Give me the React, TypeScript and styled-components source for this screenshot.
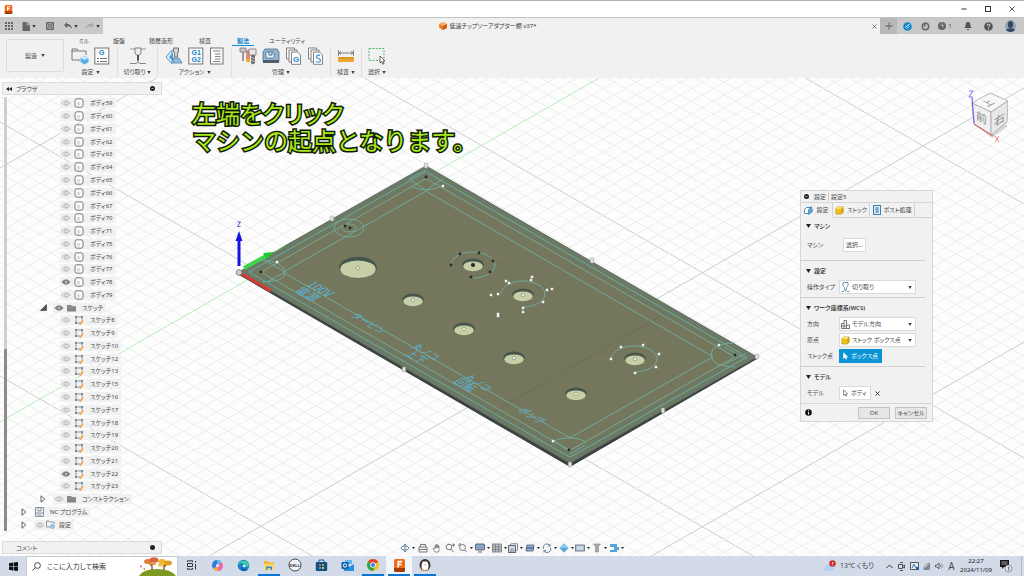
import React from "react";
import styled, { createGlobalStyle } from "styled-components";

const Global = createGlobalStyle`
  * { box-sizing: border-box; }
  html, body { margin: 0; padding: 0; }
  body, button, input, select {
    font-family: "Noto Sans", "Noto Sans CJK JP", sans-serif;
    font-size: 6px;
    line-height: 8px;
    font-feature-settings: "palt";
    color: #4a4a4a;
  }
  button, input, select { border: 0; padding: 0; margin: 0; background: none; }
  svg { display: block; flex: none; }
`;

/* ---------- layout ---------- */

const Page = styled.div`
  display: flex;
  flex-direction: column;
  min-height: 100vh;
  background: #fdfdfd;
`;

const TitleBar = styled.header`
  display: flex;
  align-items: center;
  justify-content: space-between;
  height: 18px;
  padding: 0 7px 0 4px;
  background: #fff;
  border-top: 1px solid #b0b0b0;
  border-bottom: 1px solid #c2c2c2;
`;

const WindowControls = styled.div`
  display: flex;
  gap: 14px;
`;

const IconButton = styled.button<{ $w?: number }>`
  display: flex;
  align-items: center;
  justify-content: center;
  gap: 2px;
  width: ${(p) => (p.$w ? p.$w + "px" : "auto")};
`;

const DocBar = styled.div`
  display: flex;
  height: 16px;
  background: #f1f1f1;
`;

const QuickAccess = styled.div`
  display: flex;
  align-items: center;
  width: 103px;
  padding-left: 4px;
  background: #c9c9c9;
`;

const DocTab = styled.div`
  display: flex;
  flex: 1;
  align-items: center;
  justify-content: center;
  gap: 3px;
  padding-left: 4px;
  color: #3c3c3c;
`;

const DocName = styled.span`
  font-size: 6px;
  line-height: 10px;
`;

const AccountBar = styled.div`
  display: flex;
  align-items: center;
  width: 144px;
  background: #c9c9c9;
`;

const NewTab = styled.button`
  display: flex;
  align-items: center;
  justify-content: center;
  align-self: stretch;
  width: 17px;
  margin-right: 1px;
  background: #b8b8b8;
`;

const Ribbon = styled.div`
  display: flex;
  height: 44px;
  padding-left: 6px;
  background: #f1f1f1;
`;

const Workspace = styled.button`
  display: flex;
  align-items: center;
  justify-content: center;
  gap: 4px;
  width: 58px;
  height: 33px;
  margin-top: 5px;
  border: 1px solid #dcdcdc;
  border-radius: 2px;
`;

const RibbonBody = styled.div`
  display: flex;
  flex-direction: column;
`;

const Tabs = styled.nav`
  display: flex;
  height: 12px;
  padding: 2px 0 0 10px;
`;

const Tab = styled.button<{ $w: number; $on?: boolean }>`
  width: ${(p) => p.$w}px;
  height: 10px;
  white-space: nowrap;
  color: ${(p) => (p.$on ? "#0a84c8" : "#4a4a4a")};
  font-weight: ${(p) => (p.$on ? 700 : 400)};
  border-bottom: 1px solid ${(p) => (p.$on ? "#0a8fdc" : "transparent")};
`;

const Groups = styled.div`
  display: flex;
  margin-top: 1px;
`;

const Group = styled.div<{ $w: number; $last?: boolean }>`
  display: flex;
  flex-direction: column;
  align-items: center;
  width: ${(p) => p.$w}px;
  height: 30px;
  border-right: ${(p) => (p.$last ? "0" : "1px solid #dedede")};
`;

const GroupIcons = styled.div`
  display: flex;
  align-items: center;
  gap: 5px;
  height: 18px;
`;

const GroupLabel = styled.button`
  display: flex;
  align-items: center;
  gap: 2px;
  margin-top: 3px;
  white-space: nowrap;
`;

const Stage = styled.main`
  position: relative;
  display: flex;
  flex: 1;
  overflow: hidden;
`;

const SceneLayer = styled.svg`
  position: absolute;
  inset: 0;
  width: 100%;
  height: 100%;
`;

const Browser = styled.aside`
  position: relative;
  display: flex;
  flex-direction: column;
  width: 160px;
  margin: 4px 0 2px 2px;
`;

const PanelBar = styled.div<{ $indent?: boolean }>`
  display: flex;
  align-items: center;
  justify-content: space-between;
  height: 13px;
  padding: 0 6px 0 ${(p) => (p.$indent ? 13 : 3)}px;
  background: #f1f1f1;
  border: 1px solid #dcdcdc;
`;

const BarTitle = styled.span`
  display: flex;
  align-items: center;
  gap: 4px;
`;

const TreeWrap = styled.div`
  display: flex;
  flex: 1;
  margin: 2px 0 10px 2px;
`;

const ScrollTrack = styled.div`
  width: 3px;
  padding-top: 252px;
  background: #cfcfcf;
`;

const ScrollThumb = styled.div`
  height: 100%;
  background: #8c8c8c;
`;

const Tree = styled.ul`
  display: flex;
  flex: 1;
  flex-direction: column;
  margin: 0;
  padding: 0;
  list-style: none;
`;

const TreeRow = styled.li<{ $indent: number }>`
  display: flex;
  flex: 1;
  align-items: center;
  padding-left: ${(p) => p.$indent}px;
`;

const RowLabel = styled.span<{ $gap?: number }>`
  display: flex;
  align-items: center;
  gap: ${(p) => p.$gap ?? 5}px;
  height: 10px;
  padding: 0 3px 0 1px;
  background: #f1f1f1;
  white-space: nowrap;
`;

const RowName = styled.span`
  padding-left: 3px;
`;

const Expander = styled.span`
  width: 13px;
`;

const Caption = styled.div`
  position: absolute;
  left: 192px;
  top: 23px;
  display: flex;
  flex-direction: column;
`;

const CaptionLine = styled.span<{ $tight?: boolean }>`
  height: 27px;
  font-family: "Liberation Sans", "Noto Sans CJK JP", sans-serif;
  font-size: 24px;
  font-feature-settings: ${(p) => (p.$tight ? '"palt"' : "normal")};
  font-weight: 400;
  line-height: 27px;
  white-space: nowrap;
  color: #a8e61d;
  -webkit-text-stroke: 3px #101a04;
  paint-order: stroke fill;
`;

const CubeLayer = styled.div`
  position: absolute;
  top: 8px;
  right: 16px;
`;

const Dialog = styled.section`
  position: absolute;
  top: 112px;
  right: 91px;
  width: 133px;
  background: #f1f1f1;
  border: 1px solid #d6d6d6;
`;

const DialogTitle = styled.div`
  display: flex;
  align-items: center;
  gap: 5px;
  height: 12px;
  padding-left: 3px;
  border-bottom: 1px solid #d6d6d6;
`;

const TitleText = styled.span`
  padding-right: 2px;
  margin-right: -3px;
  border-right: 1px solid #c8c8c8;
`;

const DialogTabs = styled.div`
  display: flex;
  height: 15px;
`;

const DialogTab = styled.button<{ $w: number; $on?: boolean }>`
  display: flex;
  align-items: center;
  justify-content: center;
  gap: 3px;
  width: ${(p) => p.$w}px;
  white-space: nowrap;
  border-right: 1px solid #d2d2d2;
  border-bottom: 1px solid ${(p) => (p.$on ? "transparent" : "#d2d2d2")};
`;

const TabRest = styled.div`
  flex: 1;
  border-bottom: 1px solid #d2d2d2;
`;

const Section = styled.div<{ $first?: boolean; $last?: boolean }>`
  margin-right: 7px;
  padding: ${(p) => (p.$first ? "0 0 4px" : "2px 0")};
  border-bottom: ${(p) => (p.$last ? "0" : "1px solid #cfcfcf")};
`;

const SectionHead = styled.h2`
  display: flex;
  align-items: center;
  gap: 3px;
  height: 16px;
  margin: 0;
  padding-left: 5px;
  font-size: 6px;
  font-weight: 500;
  color: #222;
`;

const Field = styled.div<{ $tall?: boolean }>`
  display: flex;
  align-items: center;
  height: ${(p) => (p.$tall ? 22 : 16)}px;
  padding-left: 6px;
`;

const FieldLabel = styled.label`
  width: 32px;
  white-space: nowrap;
`;

const SelectBox = styled.span`
  display: flex;
  align-items: center;
  gap: 2px;
  width: 77px;
  height: 14px;
  padding: 0 3px 0 1px;
  background: #fff;
  border: 1px solid #dadada;
`;

const Select = styled.select`
  flex: 1;
  min-width: 0;
  height: 10px;
  appearance: none;
  outline: 0;
`;

const FieldButton = styled.button<{ $on?: boolean; $inset?: boolean }>`
  display: flex;
  align-items: center;
  gap: 3px;
  height: 14px;
  margin-left: ${(p) => (p.$inset ? 4 : 0)}px;
  padding: 0 ${(p) => (p.$inset ? 2 : 3)}px;
  white-space: nowrap;
  color: ${(p) => (p.$on ? "#fff" : "#4a4a4a")};
  background: ${(p) => (p.$on ? "#0a94d6" : "#fff")};
  border: 1px solid ${(p) => (p.$on ? "#0a94d6" : "#dadada")};
`;

const DialogFoot = styled.div`
  display: flex;
  align-items: center;
  gap: 5px;
  height: 18px;
  padding: 0 5px 0 4px;
  border-top: 1px solid #d6d6d6;
`;

const Spacer = styled.span`
  flex: 1;
`;

const FootButton = styled.button`
  width: 32px;
  height: 12px;
  white-space: nowrap;
  background: #e6e6e6;
  border: 1px solid #c4c4c4;
`;

const NavBar = styled.div`
  position: absolute;
  left: 50%;
  bottom: 2px;
  display: flex;
  align-items: center;
  justify-content: space-between;
  width: 224px;
  height: 13px;
  margin-left: -112px;
  background: #f8f8f8;
`;

const Taskbar = styled.footer`
  display: flex;
  align-items: stretch;
  height: 20px;
  background: #d3dbe9;
`;

const StartButton = styled.button`
  display: flex;
  align-items: center;
  justify-content: center;
  width: 26px;
`;

const SearchBox = styled.label`
  display: flex;
  align-items: center;
  gap: 6px;
  width: 152px;
  padding-left: 5px;
  background: #fff;
  border: 1px solid #c6ccd6;
  border-bottom: 0;
`;

const SearchInput = styled.input`
  flex: 1;
  min-width: 0;
  font-size: 7px;
  line-height: 12px;
  outline: 0;
  &::placeholder { color: #333; opacity: 1; }
`;

const TaskButton = styled.button<{ $open?: boolean; $active?: boolean }>`
  display: flex;
  align-items: center;
  justify-content: center;
  width: 26px;
  padding: 0 2px;
  background: ${(p) => (p.$active ? "#f3f6fb" : "none")};
`;

const TaskFace = styled.span<{ $open?: boolean }>`
  display: flex;
  align-items: center;
  justify-content: center;
  width: 22px;
  height: 20px;
  border-bottom: 2px solid ${(p) => (p.$open ? "#0a74d4" : "transparent")};
`;

const Tray = styled.div`
  display: flex;
  align-items: center;
  color: #222;
`;

const Weather = styled.button`
  display: flex;
  align-items: center;
  gap: 3px;
  margin-right: 9px;
  font-size: 7px;
  white-space: nowrap;
`;

const Ime = styled.button`
  width: 13px;
  font-size: 10px;
  line-height: 12px;
`;

const Clock = styled.time`
  width: 36px;
  font-size: 6px;
  line-height: 9px;
  text-align: center;
`;

const DesktopEdge = styled.div`
  align-self: stretch;
  width: 3px;
  margin-left: 3px;
  border-left: 1px solid #b4bccb;
`;

/* ---------- icons ---------- */

const Svg = ({ w, h = w, vb, children }: { w: number; h?: number; vb?: string; children: React.ReactNode }) => (
  <svg width={w} height={h} viewBox={vb ?? `0 0 ${w} ${h}`} fill="none" aria-hidden="true">{children}</svg>
);

const Caret = () => <Svg w={4} h={3}><path d="M.3 0h3.400L2 3z" fill="#3c3c3c" /></Svg>;
const Eye = ({ on }: { on?: boolean }) => (
  <Svg w={10} h={8}>
    <path d="M.8 4Q5-.6 9.200 4 5 8.600.8 4z" fill={on ? "#858585" : "#f0f0f0"} stroke={on ? "#858585" : "#b4b4b4"} strokeWidth=".8" />
    <circle cx="5" cy="4" r="1.500" fill={on ? "#ddd" : "#f8f8f8"} stroke={on ? "#666" : "#a4a4a4"} strokeWidth=".7" />
  </Svg>
);
const BodyIcon = () => (
  <Svg w={10} h={10}>
    <rect x="1" y=".8" width="8" height="8.400" rx="2" fill="#fbfbfb" stroke="#6a6c78" strokeWidth=".9" />
    <rect x="3" y="4" width="3" height="3.500" fill="#dcdcdc" />
  </Svg>
);
const SketchIcon = () => (
  <Svg w={10} h={10}>
    <path d="M2 1v7.500M1 2h8M1 8h5M8 1v4" stroke="#7a8494" strokeWidth=".8" />
    <path d="M1 1h2v2H1zM7 1h2v2H7zM1 7h2v2H1z" fill="#7f8998" />
    <path d="M5.200 9.600l3-4.600 1.400 1-3 4z" fill="#f29a3c" />
  </Svg>
);
const FolderIcon = () => <Svg w={9} h={8}><path d="M0 1h4l1 1h4v5.500H0z" fill="#858585" /><path d="M0 3h9" stroke="#aaa" strokeWidth=".5" /></Svg>;
const NcIcon = () => (
  <Svg w={9} h={10}><path d="M.5.5h8v9h-8zM.5 6h8M3 .5V4h3V.5M2.500 8h4" stroke="#6d7f93" strokeWidth=".8" /></Svg>
);
const SetupIcon = () => (
  <Svg w={9} h={9}><path d="M.5 7V1h2.500l1 1H8v2M.5 7H4" stroke="#7a8494" strokeWidth=".8" /><circle cx="6.500" cy="6.500" r="1.900" fill="#a9d4f2" stroke="#4b93c6" strokeWidth=".7" /></Svg>
);
const Closed = () => <Svg w={6} h={8}><path d="M1 .8v6.400L4.800 4z" stroke="#555" strokeWidth=".9" /></Svg>;
const Opened = () => <Svg w={7} h={7}><path d="M.5 6.500h6v-6z" fill="#555" stroke="#333" strokeWidth=".6" /></Svg>;
const Dot = ({ minus }: { minus?: boolean }) => (
  <Svg w={5}><circle cx="2.500" cy="2.500" r="2.500" fill="#222" />{minus && <path d="M1.300 2.500h2.400" stroke="#fff" strokeWidth=".5" />}</Svg>
);
const Cursor = ({ c = "#444", f = "#fff" }: { c?: string; f?: string }) => (
  <Svg w={5} h={8}><path d="M.6.8v5.600L2 5.200l1 2 .8-.4-.9-1.900h1.700z" fill={f} stroke={c} strokeWidth=".6" /></Svg>
);

const FusionMark = ({ s = 8 }: { s?: number }) => (
  <Svg w={s} vb="0 0 10 10"><rect x=".8" width="8.400" height="10" rx="1.200" fill="#ee6c16" /><path d="M.8 7h8.400v2.500L8.400 10H1.600L.8 9z" fill="#a63b06" /><path d="M4 6.500V2h3M4 4.200h2.500" stroke="#fff" strokeWidth="1.200" /></Svg>
);

const ToolFolder = () => (
  <Svg w={18}>
    <path d="M1 13V2h5l1.500 2H15v4M1 13h8" stroke="#777" strokeWidth="1" /><path d="M1 4h6" stroke="#777" />
    <path d="M13.500 9l4 2v4l-4 2.500-4-2.500v-4z" fill="#58aee4" /><path d="M13.500 9l4 2-4 2-4-2z" fill="#c9e8fa" />
  </Svg>
);
const GLetter = styled.text`
  font-family: "Liberation Sans", sans-serif;
  font-weight: 700;
  fill: #1686c9;
`;
const ToolG = () => (
  <Svg w={16} h={18}>
    <rect x=".8" y="1" width="14" height="16" fill="#fafafa" stroke="#777" />
    <GLetter x="5" y="8" fontSize="7">G</GLetter>
    <path d="M3 11.500h2M6 11.500h7M3 14.500h2M6 14.500h7" stroke="#666" strokeWidth=".9" />
  </Svg>
);
const ToolMill = () => (
  <Svg w={18}>
    <path d="M1 2h16" stroke="#999" /><path d="M6 1h6v5l-1.500 2h-3L6 6z" fill="#eee" stroke="#777" strokeWidth=".9" /><path d="M8 8h2v5l-1 2-1-2z" fill="#555" />
    <path d="M1 16.500h6l2-1.500 2 1.500h6" stroke="#777" strokeWidth=".9" />
  </Svg>
);
const ToolSim = () => (
  <Svg w={18}>
    <path d="M1 10l6-7v14z" fill="#d3eaf9" stroke="#4b93c6" strokeWidth=".9" /><path d="M4 10l4-4v8z" fill="#4e9bd0" />
    <path d="M8.500 1h5v4l-1 1v4h-3V6l-1-1z" fill="#cfd3d8" stroke="#666" strokeWidth=".9" /><path d="M8 11h6l3 5H8z" fill="#8fbde0" stroke="#5a7f9e" strokeWidth=".8" />
  </Svg>
);
const ToolG1G2 = () => (
  <Svg w={16} h={18}>
    <rect x=".8" y="1" width="14" height="16" fill="#fafafa" stroke="#777" />
    <GLetter x="3.500" y="8" fontSize="7">G1</GLetter>
    <GLetter x="3.500" y="15" fontSize="7">G2</GLetter>
  </Svg>
);
const ToolSheet = () => (
  <Svg w={16} h={18}>
    <rect x="1.500" y="1" width="12.500" height="16" fill="#fafafa" stroke="#777" />
    <path d="M4 4h7.500M6 7h5.500M6 9.500h5.500M6 12h5.500M4 14.500h7.500" stroke="#777" strokeWidth=".9" />
  </Svg>
);
const ToolLibrary = () => (
  <Svg w={18}>
    <path d="M1 1h6v4H1z" fill="#c7c7c7" stroke="#777" strokeWidth=".8" /><path d="M3 5h2v9H3z" fill="#999" />
    <path d="M7 3h4v9l-2 3-2-3z" fill="#df8a76" /><path d="M7 12h4v3H7z" fill="#f0b03a" />
    <path d="M10 2h7v6h-7z" fill="#e8e8e8" stroke="#777" strokeWidth=".8" /><path d="M12 8h4v8l-2 1.500L12 16z" fill="#6c6c6c" /><path d="M12 10l4 2M12 13l4 2" stroke="#ddd" strokeWidth=".8" />
  </Svg>
);
const ToolMachine = () => (
  <Svg w={18}>
    <path d="M1 5l2-3h12l2 3v9H1z" fill="#8fb4d4" stroke="#55697c" strokeWidth=".8" /><rect x="4" y="5" width="8" height="6" rx="1" fill="#e5f2fc" stroke="#45627c" strokeWidth=".7" />
    <path d="M7 5v3h3V5" stroke="#45627c" /><path d="M1 13h16v3H1z" fill="#515c68" />
  </Svg>
);
const Sheets = ({ letter }: { letter: string }) => (
  <Svg w={17} h={18}>
    <path d="M1.500 1h8v11h-8z" fill="#fafafa" stroke="#777" strokeWidth=".9" /><path d="M4 3h8v12H4z" fill="#fafafa" stroke="#777" strokeWidth=".9" />
    <path d="M6.500 5h6l3 3v9.300h-9z" fill="#fdfdfd" stroke="#777" strokeWidth=".9" />
    {letter === "G" ? <GLetter x="8" y="15" fontSize="8">G</GLetter> : <path d="M13 8.500c-2-1-4 0-3.500 1.500s4 1.500 4 3.500-3 2-4.500 1" stroke="#4a9fd6" strokeWidth="1.400" />}
  </Svg>
);
const ToolMeasure = () => (
  <Svg w={18}>
    <path d="M1.500 3v6M16.500 3v6M2 6h14M4 4.500L2 6l2 1.500M14 4.500L16 6l-2 1.500" stroke="#777" strokeWidth=".9" />
    <rect x="1" y="10" width="16" height="5" fill="#eda92f" /><path d="M3 10v2M6 10v2M9 10v2M12 10v2M15 10v2" stroke="#a86d0c" strokeWidth=".7" />
  </Svg>
);
const ToolSelect = () => (
  <Svg w={18}>
    <rect x="1" y="1.500" width="15" height="12" stroke="#4fb36a" strokeDasharray="2 1.300" />
    <path d="M12 9v7l1.600-1.500 1.200 2.700 1.300-.6-1.200-2.600H17z" fill="#fff" stroke="#444" strokeWidth=".8" />
  </Svg>
);

/* ---------- drawing of the model ---------- */

const LEFT = { x: 239, y: 272 };
const at = (u: number, v: number) => `${LEFT.x + 331 * u + 187 * v},${LEFT.y + 191 * u - 106 * v}`;
const frame = (inset: number) => {
  const a = inset / 331;
  const b = inset / 187;
  return [at(a, b), at(1 - a, b), at(1 - a, 1 - b), at(a, 1 - b)].join(" ");
};

const range = (n: number) => Array.from({ length: n }, (_, i) => i);
const MINOR = 12.7;

const Grid = () => (
  <g>
    {range(92).map((i) => {
      const b = -640 + i * MINOR;
      return <path key={i} d={`M0 ${b}L1024 ${b + 590}`} stroke={i % 20 === 0 ? "#cdcdcd" : "#ededed"} />;
    })}
    {range(94).map((i) => {
      const b = 66.4 + i * MINOR;
      const major = i % 20 === 8;
      const green = i === 28;
      return <path key={i} d={`M0 ${b}L1024 ${b - 588}`} stroke={green ? "#b4eeb4" : major ? "#cdcdcd" : "#ededed"} />;
    })}
  </g>
);

const holes: [number, number, number][] = [
  [358, 268, 18], [473, 265, 10], [413, 300, 10], [523, 295, 10],
  [464, 329, 10], [514, 358, 10], [576, 394, 10], [635, 359, 10],
];

const lightDots: [number, number][] = [
  [443, 186], [277, 262], [719, 345], [553, 441],
  [491, 295], [498, 294], [506, 281], [509, 283], [531, 280], [532, 277], [547, 290], [552, 289], [543, 302], [523, 308], [523, 312], [498, 314], [498, 316],
  [611, 359], [621, 347], [643, 345], [659, 354], [656, 367], [635, 373],
];
const darkDots: [number, number][] = [
  [426, 177], [261, 272], [735, 355], [569, 450], [345, 226], [350, 228],
  [451, 265], [460, 254], [479, 253], [493, 261], [490, 272], [471, 277],
];
const pins: [number, number][] = [[426, 166], [332, 219], [592, 261], [757, 357], [663, 411], [570, 465], [404, 370]];

const engraved: [number, number, number, string][] = [
  [306, 285, 11, "100V"], [294, 291, 11, "電源"], [350, 316, 9, "タービン"], [411, 347, 9, "丸ノコ"],
  [404, 354, 10, "上下"], [463, 378, 9, "丸ノコ"], [453, 382, 10, "回転"], [517, 411, 9, "ポンプ"],
];

const Engraving = styled.text`
  font-family: "Noto Sans CJK JP", sans-serif;
  font-feature-settings: normal;
  font-weight: 400;
  fill: #5ab4d8;
`;

const Scene = () => (
  <SceneLayer viewBox="0 78 1024 478" preserveAspectRatio="xMinYMin slice" aria-hidden="true">
    <Grid />
    <path d="M239 272L570 463 757 356v3L570 467 239 275z" fill="#3c4240" />
    <polygon points={[at(0, 0), at(1, 0), at(1, 1), at(0, 1)].join(" ")} fill="#6b7965" stroke="#5e6c60" />
    <polygon points={frame(8)} fill="#75775d" />
    <path d="M490 414L664 314" stroke="#6c6e58" />
    <g fill="none" stroke="#70aa9d" strokeWidth="1">
      {[5, 11, 22].map((n) => <polygon key={n} points={frame(n)} />)}
      <path d="M411 186q15 8 30 0M409 179l17 11 17-11M409 179l17-9" />
      <path d="M735 343q-24 0-24 12t24 12M724 347l22 12M724 365l22-12" />
      <path d="M552 443q4-5 17-5t17 5M555 442l16 10M585 445l-16 10" />
      <path d="M262 260q22 2 23 12t-23 10M266 261l19 11-18 10" />
      <ellipse cx="349" cy="228" rx="15" ry="9" /><ellipse cx="349" cy="228" rx="7" ry="4" />
      <path d="M451 265A22 13 0 1 1 473 278" />
      <path d="M501 294A22 13 0 1 1 523 307" />
      <path d="M611 359A23 13 0 1 1 635 372" />
    </g>
    <g stroke="#8b7d62" strokeWidth=".8" fill="none">
      <path d="M440 264l4 2M455 251l5 2M482 250l4-2M493 259l8-2M492 273l6 2M472 280l3 3" />
      <path d="M534 278l5-2M549 303l-6-2M603 359l6 1M645 343l5-3M660 353l6-2M656 367l6 3M636 376l3 3" />
    </g>
    {holes.map(([x, y, r]) => (
      <g key={`${x}-${y}`}>
        <ellipse cx={x} cy={y - 0.5} rx={r + 0.8} ry={r * 0.6} fill="#46564c" />
        <ellipse cx={x} cy={y + 1.3} rx={r - 0.3} ry={r * 0.49} fill="#c6cfa6" />
        <circle cx={x} cy={y} r="1.800" fill="#e8e8dc" stroke="#8f9686" strokeWidth=".7" />
      </g>
    ))}
    <circle cx="473" cy="265" r="2" fill="#262b28" />
    {engraved.map(([x, y, s, t]) => (
      <Engraving key={`${t}-${x}`} fontSize={s} transform={`translate(${x} ${y}) rotate(30) skewX(-30)`}>{t}</Engraving>
    ))}
    {darkDots.map(([x, y]) => <circle key={`${x}-${y}`} cx={x} cy={y} r="1.400" fill="#262b28" />)}
    {lightDots.map(([x, y]) => <rect key={`${x}-${y}`} x={x - 1.2} y={y - 1.2} width="2.400" height="2.400" fill="#f4f4f0" />)}
    {pins.map(([x, y]) => <rect key={`${x}-${y}`} x={x - 1.7} y={y - 3} width="3.400" height="5" rx="1" fill="#dfe2de" stroke="#9aa09a" strokeWidth=".6" />)}
    <path d="M244 268L266 256" stroke="#3fd44b" strokeWidth="4" />
    <path d="M263 253l11-1-7 7z" fill="#20c830" /><path d="M274 252l10-6" stroke="#86e88a" />
    <path d="M242 274L271 291" stroke="#d63a30" strokeWidth="3" />
    <path d="M239 266v-28" stroke="#1414e0" strokeWidth="3" /><path d="M235.500 241l3.500-10 3.500 10z" fill="#1414e0" />
    <path d="M237.500 222h3l-3 4.500h3" stroke="#4a4ab8" strokeWidth=".9" fill="none" />
    <circle cx="239" cy="272.500" r="2.800" fill="#ccc" stroke="#888" />
  </SceneLayer>
);

const CubeText = styled.text`
  font-family: "Noto Sans CJK JP", sans-serif;
  font-weight: 400;
  fill: #85898d;
`;

const ViewCube = () => (
  <CubeLayer>
    <Svg w={42} h={58} vb="965 86 42 58">
      <path d="M974 125l17 13 16-12-8-4z" fill="#d6d6d6" />
      <g stroke="#a6a6a6" strokeWidth=".8" strokeLinejoin="round">
        <path d="M971 103l18-10 18 8-17 11z" fill="#f7f7f7" />
        <path d="M971 103l19 9v23l-17-11z" fill="#f0f0f0" />
        <path d="M1007 101l-17 11v23l16-13z" fill="#e8e8e8" />
      </g>
      <CubeText fontSize="9" transform="translate(986 107) rotate(-28) skewX(32)">上</CubeText>
      <CubeText fontSize="11" transform="translate(975 119) skewY(27)">前</CubeText>
      <CubeText fontSize="11" transform="translate(993 127) skewY(-33)">右</CubeText>
      <path d="M971 98l2 25" stroke="#6a6af0" strokeWidth="1.200" /><path d="M973 124l19 12" stroke="#d87070" strokeWidth="1.200" />
      <path d="M968 91h4l-4 6h4" stroke="#6a6af0" strokeWidth=".9" /><path d="M994 136l4 6M998 136l-4 6" stroke="#ee7d7d" strokeWidth=".9" />
    </Svg>
  </CubeLayer>
);

/* ---------- data ---------- */

const bodies = [59, 60, 61, 62, 63, 64, 65, 66, 67, 70, 71, 75, 76, 77, 78, 79];
const sketches = [8, 9, 10, 12, 13, 15, 16, 17, 18, 19, 20, 21, 22, 23];

const navIcons: { d: React.ReactNode; caret?: boolean }[] = [
  { caret: true, d: <><ellipse cx="5" cy="5" rx="4" ry="2" stroke="#6d8ba6" /><path d="M5 1v8M3.500 2.500L5 1l1.500 1.500M3.500 7.500L5 9l1.500-1.500" stroke="#6d8ba6" /></> },
  { d: <><path d="M1 4h8v5H1zM2.500 4V1.500h5V4M1 6.500h8" stroke="#777" /></> },
  { d: <path d="M3 9L1 5.500l1-.5 1 1V2.500h1V5 1.500h1V5 2h1v3-2h1v4L6.500 9z" fill="#fff" stroke="#777" strokeWidth=".8" /> },
  { d: <><circle cx="4" cy="4" r="2.800" stroke="#777" /><path d="M6 6l2.500 3M7 2h3M8.500.5v3" stroke="#777" /></> },
  { caret: true, d: <><circle cx="4.500" cy="4.500" r="3" stroke="#777" /><path d="M6.500 7l2 2M1 1h2M1 1v2" stroke="#777" /></> },
  { caret: true, d: <><rect x=".5" y="1" width="9" height="6" rx="1" fill="#84a3c4" stroke="#667" /><path d="M3 9h4" stroke="#667" /></> },
  { caret: true, d: <><rect x=".5" y="1" width="9" height="8" fill="#b9bec4" stroke="#777" strokeWidth=".8" /><path d="M.5 4h9M.5 6.500h9M3.500 1v8M6.500 1v8" stroke="#777" strokeWidth=".7" /></> },
  { caret: true, d: <><rect x=".5" y="2.500" width="7" height="7" fill="#cfd8e0" stroke="#667" /><path d="M2 2.500L3 .8h6.500v6L8 8M4 6a1.500 1.500 0 1 0 .1 0" stroke="#667" strokeWidth=".8" /></> },
  { caret: true, d: <><path d="M2 2h7L8 8H1z" fill="#8eb4d8" stroke="#557" strokeWidth=".8" /><path d="M1 5h8" stroke="#446" /></> },
  { caret: true, d: <path d="M1.500 6A3.500 3.500 0 0 1 8 3M8.500 4.500A3.500 3.500 0 0 1 2 7.500M8 .8V3H6M2 9.500v-2h2" stroke="#5f86a8" /> },
  { caret: true, d: <><path d="M5 .5L9.500 5 5 9.500.5 5z" fill="#55a4dc" /><path d="M5 .5L9.500 5H.5z" fill="#8cc6ee" /></> },
  { caret: true, d: <><rect x=".5" y="2" width="9" height="6" fill="#a9c2da" stroke="#667" strokeWidth=".8" /><path d="M2 4h6M2 6h6" stroke="#fff" strokeWidth=".8" /></> },
  { caret: true, d: <path d="M1.500 1h7L6.500 3.500V9h-3V3.500z" fill="#a8a8a8" stroke="#888" strokeWidth=".6" /> },
  { caret: true, d: <><path d="M1 1h7v3h2v3H8v2H1V7h4V4H1z" fill="#55a4dc" /></> },
];

const tasks: { name: string; open?: boolean; active?: boolean; icon: React.ReactNode }[] = [
  { name: "タスク ビュー", icon: <Svg w={11} h={10}><path d="M1.500 2V.8h5V2M1.500 3.500h5v3h-5zM1.500 8v1.200h5V8M9.500 1v1.500M9.500 4v5.500" stroke="#222" strokeWidth=".9" /></Svg> },
  { name: "Copilot", icon: <Svg w={13}><path d="M1 7c0-4 2-6 5-6l1 3-2 5-3 1z" fill="#2f7de0" /><path d="M6 1h3l2 4-4 1z" fill="#53c4d8" /><path d="M12 6c0 4-2 6-5 6L6 9l2-5 3-.5z" fill="#e66ba6" /><path d="M7 12H4L2 9l4-1z" fill="#f5b03c" /><circle cx="6.500" cy="6.500" r="1.500" fill="#f3e6f7" /></Svg> },
  { name: "Edge", icon: <Svg w={13}><circle cx="6.500" cy="6.500" r="5.800" fill="#1b7fd0" /><path d="M1 6a5.700 5.700 0 0 1 11 0c0 2-3 2.500-4 1.500C8 4 3 3 1 6z" fill="#3ccf9c" /><path d="M5 7c0 3 3 4.500 6 3.500-3 3-8 1-6-3.500z" fill="#0c4fa0" /><circle cx="7" cy="7" r="1.300" fill="#e8f3ff" /></Svg> },
  { name: "エクスプローラー", open: true, icon: <Svg w={12} h={11}><path d="M1 1h4l1 1.500h5V10H1z" fill="#f4b93a" /><path d="M1 4h10v6H1z" fill="#fbd66b" /><path d="M3 10V6.500h6V10H7.500V8h-3v2z" fill="#2f8bd8" /></Svg> },
  { name: "Dell", icon: <Svg w={14}><circle cx="7" cy="7" r="6" fill="#f2f4f8" stroke="#444" /><text x="7" y="8.500" textAnchor="middle" fontSize="4" fontWeight="700" fontFamily="Liberation Sans" fill="#333">DELL</text></Svg> },
  { name: "Store", icon: <Svg w={13}><path d="M4 3V1h5v2" stroke="#1a5f9e" /><rect x=".8" y="3" width="11.400" height="9" rx="1" fill="#134f84" /><path d="M4 5h2v2H4z" fill="#e55a3c" /><path d="M7 5h2v2H7z" fill="#7dbb42" /><path d="M4 8h2v2H4z" fill="#35a8e0" /><path d="M7 8h2v2H7z" fill="#f3bc3a" /></Svg> },
  { name: "Outlook", icon: <Svg w={13}><path d="M4 1h7v4H4z" fill="#5db9ee" /><path d="M3 5l5 3 5-3v7H3z" fill="#2590dc" /><rect x=".5" y="3" width="7" height="7" rx="1" fill="#0c5ea8" /><circle cx="4" cy="6.500" r="1.700" stroke="#fff" /></Svg> },
  { name: "Chrome", open: true, icon: <Svg w={14}><circle cx="7" cy="7" r="6" fill="#f6c21c" /><path d="M7 7L1.800 4A6 6 0 0 1 12.200 4z" fill="#e2412f" /><path d="M7 7L1.800 4A6 6 0 0 0 7 13l2-4z" fill="#2da44e" /><circle cx="7" cy="7" r="2.800" fill="#fff" /><circle cx="7" cy="7" r="2" fill="#3b7de8" /></Svg> },
  { name: "Fusion", open: true, active: true, icon: <FusionMark s={13} /> },
  { name: "ペンギン", open: true, icon: <Svg w={14}><ellipse cx="7" cy="7" rx="5.500" ry="6" fill="#3b332e" /><ellipse cx="7" cy="8" rx="3.500" ry="4.500" fill="#fff" /><circle cx="5.500" cy="4.500" r="1" fill="#fff" /><circle cx="8.500" cy="4.500" r="1" fill="#fff" /><path d="M6 6h2L7 7.500z" fill="#f09a26" /><path d="M3 12h3M8 12h3" stroke="#f09a26" /></Svg> },
];

const RibbonGroup = ({ w, label, last, children }: { w: number; label: string; last?: boolean; children: React.ReactNode }) => (
  <Group $w={w} $last={last}>
    <GroupIcons>{children}</GroupIcons>
    <GroupLabel>{label}<Caret /></GroupLabel>
  </Group>
);

const Choice = ({ id, label, icon, value }: { id: string; label: string; icon: React.ReactNode; value: string }) => (
  <Field>
    <FieldLabel htmlFor={id}>{label}</FieldLabel>
    <SelectBox>{icon}<Select id={id} defaultValue={value}><option>{value}</option></Select><Caret /></SelectBox>
  </Field>
);

const Head = ({ children }: { children: React.ReactNode }) => (
  <SectionHead><Svg w={5} h={4}><path d="M0 0h5L2.500 4z" fill="#222" /></Svg>{children}</SectionHead>
);

const StockCube = ({ s = 9 }: { s?: number }) => (
  <Svg w={s} vb="0 0 10 10"><path d="M1 3l2-2h6v6L7 9H1z" fill="#f1c21e" stroke="#b08a14" strokeWidth=".7" /><path d="M1 3l2-2h6L7 3z" fill="#fbe577" /><path d="M7 3l2-2v6L7 9z" fill="#cf9d10" /></Svg>
);

export default function App() {
  return (
    <Page>
      <Global />
      <TitleBar>
        <FusionMark s={9} />
        <WindowControls>
          <IconButton $w={10} aria-label="最小化"><Svg w={6}><path d="M.5 3h5" stroke="#333" /></Svg></IconButton>
          <IconButton $w={10} aria-label="最大化"><Svg w={6}><rect x=".5" y=".5" width="5" height="5" stroke="#333" /></Svg></IconButton>
          <IconButton $w={10} aria-label="閉じる"><Svg w={6}><path d="M.5.5l5 5M5.500.5l-5 5" stroke="#333" strokeWidth=".8" /></Svg></IconButton>
        </WindowControls>
      </TitleBar>

      <DocBar>
        <QuickAccess>
          <IconButton $w={9} aria-label="データ パネル"><Svg w={8}><path d="M0 0h2v2H0zM3 0h2v2H3zM6 0h2v2H6zM0 3h2v2H0zM3 3h2v2H3zM6 3h2v2H6zM0 6h2v2H0zM3 6h2v2H3zM6 6h2v2H6z" fill="#666" /></Svg></IconButton>
          <IconButton $w={31} aria-label="ファイル"><Svg w={8} h={9}><path d="M.5 0h4.500l3 3v6H.5z" fill="#666" /><path d="M5 0v3h3" stroke="#ccc" strokeWidth=".7" /></Svg><Caret /></IconButton>
          <IconButton $w={12} aria-label="保存"><Svg w={8}><path d="M.5.5h7v7h-7z" fill="#aaa" stroke="#666" /><path d="M2 .5V3h4V.5M2 7.500V5h4v2.500" stroke="#666" /></Svg></IconButton>
          <IconButton $w={30} aria-label="元に戻す"><Svg w={8}><path d="M3 0v2c3 0 5 2 5 5-1-2-2.500-2.700-5-2.700v2L0 3z" fill="#666" /></Svg><Caret /></IconButton>
          <IconButton $w={14} aria-label="やり直し"><Svg w={8}><path d="M5 0v2C2 2 0 4 0 7c1-2 2.500-2.700 5-2.700v2L8 3z" fill="#aaa" /></Svg><Caret /></IconButton>
        </QuickAccess>
        <DocTab>
          <Svg w={8}><path d="M4 0l3.800 2v4L4 8 .2 6V2z" fill="#ee7d22" /><path d="M4 0l3.800 2L4 4 .2 2z" fill="#f9b46c" /><path d="M4 4l3.800-2v4L4 8z" fill="#cf5a10" /></Svg>
          <DocName>低速チップソーアダプター類 v37*</DocName>
        </DocTab>
        <IconButton $w={12} aria-label="タブを閉じる"><Svg w={5}><path d="M.5.5l4 4M4.500.5l-4 4" stroke="#555" strokeWidth=".8" /></Svg></IconButton>
        <AccountBar>
          <NewTab aria-label="新しいタブ"><Svg w={8}><path d="M4 .5v7M.5 4h7" stroke="#777" strokeWidth="1.300" /></Svg></NewTab>
          <IconButton $w={18} aria-label="拡張機能"><Svg w={9}><circle cx="4.500" cy="4.500" r="4.300" fill="#1189cf" /><path d="M2.500 5.500l2-2 2-1M4 6.500l2-2" stroke="#fff" /></Svg></IconButton>
          <IconButton $w={18} aria-label="更新"><Svg w={9}><circle cx="4.500" cy="4.500" r="3.200" stroke="#666" strokeWidth="1.500" /><path d="M4.500 4.500L3 2" stroke="#666" strokeWidth="1.500" /></Svg></IconButton>
          <IconButton $w={22} aria-label="ジョブ"><Svg w={8}><circle cx="4" cy="4" r="4" fill="#666" /><path d="M4 1.500V4h2" stroke="#ddd" strokeWidth=".8" /></Svg>1</IconButton>
          <IconButton $w={24} aria-label="通知"><Svg w={8}><path d="M4 0c2 0 2.500 2 2.500 4l1 2h-7l1-2C1.500 2 2 0 4 0zM3 7h2v1H3z" fill="#555" /></Svg></IconButton>
          <IconButton $w={16} aria-label="ヘルプ"><Svg w={9}><circle cx="4.500" cy="4.500" r="4.300" fill="#555" /><path d="M3.200 3.500c0-2 2.800-1.500 2.600 0-.2.800-1.300.8-1.300 2M4.500 6.500v1" stroke="#fff" strokeWidth=".9" /></Svg></IconButton>
          <IconButton $w={28} aria-label="アカウント"><Svg w={11} h={12}><ellipse cx="5.500" cy="6" rx="5.500" ry="6" fill="#91a6bd" /><ellipse cx="5.500" cy="4.500" rx="2.600" ry="3.500" fill="#35475c" /><path d="M1 10c1-2.500 8-2.500 9 0-2 2.500-7 2.500-9 0z" fill="#35475c" /></Svg></IconButton>
        </AccountBar>
      </DocBar>

      <Ribbon>
        <Workspace>製造 <Caret /></Workspace>
        <RibbonBody>
          <Tabs>
            <Tab $w={20}>ミル</Tab>
            <Tab $w={50}>旋盤</Tab>
            <Tab $w={34}>積層造形</Tab>
            <Tab $w={54}>検査</Tab>
            <Tab $w={22} $on>製法</Tab>
            <Tab $w={66}>ユーティリティ</Tab>
          </Tabs>
          <Groups>
            <RibbonGroup w={54} label="設定"><ToolFolder /><ToolG /></RibbonGroup>
            <RibbonGroup w={40} label="切り取り"><ToolMill /></RibbonGroup>
            <RibbonGroup w={74} label="アクション"><ToolSim /><ToolG1G2 /><ToolSheet /></RibbonGroup>
            <RibbonGroup w={99} label="管理"><ToolLibrary /><ToolMachine /><Sheets letter="G" /><Sheets letter="S" /></RibbonGroup>
            <RibbonGroup w={31} label="検査"><ToolMeasure /></RibbonGroup>
            <RibbonGroup w={30} label="選択" last><ToolSelect /></RibbonGroup>
          </Groups>
        </RibbonBody>
      </Ribbon>

      <Stage>
        <Scene />
        <Browser>
          <PanelBar>
            <BarTitle><Svg w={6} h={4}><path d="M3 0v4L0 2zM6 0v4L3 2z" fill="#222" /></Svg>ブラウザ</BarTitle>
            <Dot minus />
          </PanelBar>
          <TreeWrap>
            <ScrollTrack><ScrollThumb /></ScrollTrack>
            <Tree>
              {bodies.map((n) => (
                <TreeRow key={n} $indent={53}><RowLabel $gap={3}><Eye on={n === 78} /><BodyIcon /><RowName>ボディ{n}</RowName></RowLabel></TreeRow>
              ))}
              <TreeRow $indent={33}><Expander><Opened /></Expander><RowLabel $gap={3}><Eye on /><FolderIcon /><RowName>スケッチ</RowName></RowLabel></TreeRow>
              {sketches.map((n) => (
                <TreeRow key={n} $indent={53}><RowLabel $gap={3}><Eye on={n === 22} /><SketchIcon /><RowName>スケッチ{n}</RowName></RowLabel></TreeRow>
              ))}
              <TreeRow $indent={33}><Expander><Closed /></Expander><RowLabel $gap={3}><Eye /><FolderIcon /><RowName>コンストラクション</RowName></RowLabel></TreeRow>
              <TreeRow $indent={14}><Expander><Closed /></Expander><RowLabel $gap={3}><NcIcon /><RowName>NC プログラム</RowName></RowLabel></TreeRow>
              <TreeRow $indent={14}><Expander><Closed /></Expander><RowLabel $gap={1}><Eye /><SetupIcon /><RowName>設定</RowName></RowLabel></TreeRow>
            </Tree>
          </TreeWrap>
          <PanelBar $indent><span>コメント</span><Dot /></PanelBar>
        </Browser>

        <Caption>
          <CaptionLine $tight>左端をクリック</CaptionLine>
          <CaptionLine>マシンの起点となります。</CaptionLine>
        </Caption>
        <ViewCube />

        <Dialog aria-label="設定">
          <DialogTitle><Dot minus /><TitleText>設定</TitleText><span>設定5</span></DialogTitle>
          <DialogTabs>
            <DialogTab $w={32} $on><Svg w={9}><path d="M.5 3.500l2-2h4v4l-2 2h-4z" fill="#fff" stroke="#2e7fb8" strokeWidth=".9" /><path d="M4.500 3.500l3-3 1 5-4 3z" fill="#5aa9dc" stroke="#2e6fa0" strokeWidth=".6" /></Svg>設定</DialogTab>
            <DialogTab $w={37}><StockCube />ストック</DialogTab>
            <DialogTab $w={45}><Svg w={8} h={10}><rect x=".5" y=".5" width="7" height="9" fill="#dceefa" stroke="#3a7fb5" /><path d="M2 3h4M2 5h4M2 7h4M4 2v6" stroke="#3a7fb5" strokeWidth=".8" /></Svg>ポスト処理</DialogTab>
            <TabRest />
          </DialogTabs>
          <Section $first>
            <Head>マシン</Head>
            <Field $tall><FieldLabel htmlFor="machine">マシン</FieldLabel><FieldButton id="machine" $inset>選択...</FieldButton></Field>
          </Section>
          <Section>
            <Head>設定</Head>
            <Choice id="op" label="操作タイプ" value="切り取り" icon={<Svg w={9} h={10}><path d="M2 .5h5V4L5.500 5.500v2h-2v-2L2 4zM.5 9.500H3L4.500 8 6 9.500h2.500" stroke="#5f86a0" strokeWidth=".8" /></Svg>} />
          </Section>
          <Section>
            <Head>ワーク座標系(WCS)</Head>
            <Choice id="dir" label="方向" value="モデル方向" icon={<Svg w={9} h={9}><path d="M.5 8.500v-5H3v-3h2.500v8zM3 3.500v5M5.500 5h3v3.500h-3M.5 6h5" stroke="#555" strokeWidth=".8" /></Svg>} />
            <Choice id="origin" label="原点" value="ストック ボックス点" icon={<StockCube />} />
            <Field><FieldLabel htmlFor="stock">ストック点</FieldLabel><FieldButton id="stock" $on><Cursor c="#fff" />ボックス点</FieldButton></Field>
          </Section>
          <Section $last>
            <Head>モデル</Head>
            <Field>
              <FieldLabel htmlFor="model">モデル</FieldLabel><FieldButton id="model"><Cursor />ボディ</FieldButton>
              <IconButton $w={13} aria-label="解除"><Svg w={5}><path d="M.5.5l4 4M4.500.5l-4 4" stroke="#333" /></Svg></IconButton>
            </Field>
          </Section>
          <DialogFoot>
            <Svg w={7}><circle cx="3.500" cy="3.500" r="3.300" fill="#111" /><path d="M3.500 3v2.500M3.500 1.300v1" stroke="#fff" strokeWidth=".9" /></Svg>
            <Spacer />
            <FootButton>OK</FootButton>
            <FootButton>キャンセル</FootButton>
          </DialogFoot>
        </Dialog>

        <NavBar>
          {navIcons.map((n, i) => (
            <IconButton key={i} $w={n.caret ? 15 : 12} aria-label={`表示ツール ${i + 1}`}><Svg w={10}>{n.d}</Svg>{n.caret && <Svg w={3} h={2}><path d="M0 0h3L1.500 2z" fill="#222" /></Svg>}</IconButton>
          ))}
        </NavBar>
      </Stage>

      <Taskbar>
        <StartButton aria-label="スタート"><Svg w={9}><path d="M0 1.200L4 .6v3.600H0zM4.600.5L9 0v4.200H4.600zM0 4.800h4v3.600L0 7.800zM4.600 4.800H9V9l-4.400-.5z" fill="#111" /></Svg></StartButton>
        <SearchBox>
          <Svg w={9}><circle cx="5.500" cy="3.500" r="2.900" stroke="#333" strokeWidth=".9" /><path d="M3.300 5.700L.5 8.500" stroke="#333" strokeWidth=".9" /></Svg>
          <SearchInput aria-label="検索" placeholder="ここに入力して検索" />
          <Svg w={38} h={19}>
            <path d="M0 19q4-7 18-7t19 7z" fill="#7d9a20" /><path d="M13 13V6M25 13V7M13 9l-3-3M25 10l3-3" stroke="#8a4b1e" strokeWidth="1.300" />
            <ellipse cx="9" cy="4.500" rx="4" ry="2.500" fill="#e07b3c" /><ellipse cx="15" cy="3" rx="4.500" ry="2.700" fill="#d8683a" /><ellipse cx="14" cy="6.500" rx="3" ry="1.500" fill="#e99348" />
            <ellipse cx="23" cy="4.500" rx="4" ry="2.500" fill="#efb32c" /><ellipse cx="29" cy="6" rx="4" ry="2.500" fill="#dfa022" /><ellipse cx="22" cy="8" rx="3" ry="1.500" fill="#f0c246" />
            <path d="M1 8l2 1-1 2zM4 12l2-1v2z" fill="#e0532c" />
          </Svg>
        </SearchBox>
        {tasks.map((t) => (
          <TaskButton key={t.name} aria-label={t.name} $active={t.active}><TaskFace $open={t.open}>{t.icon}</TaskFace></TaskButton>
        ))}
        <Spacer />
        <Tray>
          <Weather><Svg w={14} h={12}><path d="M2 11a2.500 2.500 0 0 1 0-4 3.500 3.500 0 0 1 6-1 3 3 0 0 1 3 5z" fill="#b4d3f4" /><circle cx="9.500" cy="3.500" r="3.300" fill="#cf3030" /><path d="M9.500 2v2M9.500 4.700v.8" stroke="#fff" strokeWidth=".8" /></Svg>13℃ くもり</Weather>
          <IconButton $w={12} aria-label="隠れているアイコン"><Svg w={7} h={5}><path d="M.5 4L3.500 1l3 3" stroke="#222" strokeWidth=".9" /></Svg></IconButton>
          <IconButton $w={13} aria-label="会議"><Svg w={7} h={9}><path d="M2 .5h3M2 8.500h3M.5 2.500h4v4h-4zM4.500 4l2-1v3l-2-1" stroke="#333" strokeWidth=".8" /></Svg></IconButton>
          <IconButton $w={13} aria-label="画面"><Svg w={9} h={8}><path d="M.5.500h8v7h-8z" fill="#e9eef6" stroke="#333" strokeWidth=".8" /><path d="M2 6l2-4 1 3h2" stroke="#235c9c" strokeWidth=".8" /><path d="M6 5h3v3H6z" fill="#2264a8" /></Svg></IconButton>
          <IconButton $w={12} aria-label="Wi-Fi"><Svg w={8}><path d="M0 8L7 1v7z" fill="#8d96a5" /><path d="M3 8c0-2 1.500-4 4-4M1 7c0-3 3-5.500 6-5.500" stroke="#444" strokeWidth=".6" /></Svg></IconButton>
          <IconButton $w={12} aria-label="音量"><Svg w={8}><path d="M.5 3h1.500L4 1v6L2 5H.5z" stroke="#333" strokeWidth=".7" /><path d="M5 2.500q1.300 1.500 0 3M6.500 1.500q2 2.500 0 5" stroke="#777" strokeWidth=".7" /></Svg></IconButton>
          <Ime>A</Ime>
          <Clock>22:27<br />2024/11/09</Clock>
          <IconButton $w={24} aria-label="通知センター"><Svg w={14} h={14}><path d="M1 1h9v7H5L3 10V8H1z" fill="#181818" /><path d="M2.500 3h6M2.500 5h6" stroke="#ddd" strokeWidth=".7" /><circle cx="9.500" cy="9.500" r="3.500" fill="#dfe3ea" stroke="#777" strokeWidth=".7" /><path d="M9 8.500l.7-.5v3.500" stroke="#333" strokeWidth=".7" /></Svg></IconButton>
          <DesktopEdge />
        </Tray>
      </Taskbar>
    </Page>
  );
}
